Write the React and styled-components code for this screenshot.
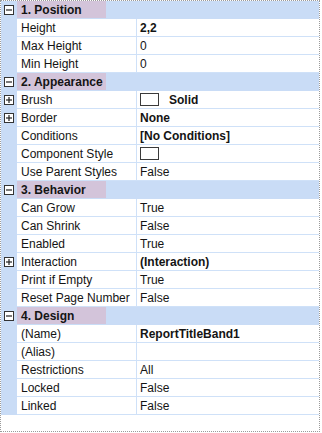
import styled, { createGlobalStyle } from "styled-components";

const GlobalStyle = createGlobalStyle`
  html, body {
    margin: 0;
    padding: 0;
    background: #ffffff;
  }
  body {
    font-family: "Liberation Sans", Arial, sans-serif;
    font-size: 12px;
    color: #141414;
  }
`;

const Grid = styled.div`
  width: 318px;
  height: 430px;
  border: 1px dotted #9a9a9a;
  background: #ffffff;
  display: flex;
  flex-direction: column;
`;

const HeaderRow = styled.div`
  display: flex;
  height: 18px;
  background: #c9dcf6;
`;

const Gutter = styled.div`
  width: 16px;
  flex: none;
  background: #c9dcf6;
  display: flex;
  align-items: center;
  justify-content: center;
  padding-right: 1px;
  box-sizing: border-box;
`;

const Label = styled.div`
  width: 89px;
  height: 17px;
  background: #d3c4da;
  font-weight: bold;
  padding-left: 4px;
  box-sizing: border-box;
  display: flex;
  align-items: center;
`;

const Row = styled.div`
  display: flex;
  height: 18px;
`;

const Name = styled.div`
  width: 120px;
  flex: none;
  box-sizing: border-box;
  padding-left: 4px;
  border-right: 1px solid #cfe1f8;
  border-bottom: 1px solid #cfe1f8;
  display: flex;
  align-items: center;
  white-space: nowrap;
`;

const Value = styled.div`
  flex: 1;
  box-sizing: border-box;
  padding-left: 3px;
  border-bottom: 1px solid #cfe1f8;
  display: flex;
  align-items: center;
  gap: 10px;
  font-weight: ${({ $bold }) => ($bold ? "bold" : "normal")};
  white-space: nowrap;
`;

const Swatch = styled.span`
  width: 19px;
  height: 13px;
  box-sizing: border-box;
  border: 1px solid #3a3a3a;
  background: #ffffff;
  flex: none;
`;

const Toggle = ({ open }) => (
  <svg width="10" height="10" viewBox="0 0 10 10">
    <rect x="0.5" y="0.5" width="9" height="9" fill="#ffffff" stroke="#333" />
    <path d="M2 5h6" stroke="#222" strokeWidth="1.2" />
    {!open && <path d="M5 2v6" stroke="#222" strokeWidth="1.2" />}
  </svg>
);

const sections = [
  {
    title: "1. Position",
    rows: [
      { name: "Height", value: "2,2", bold: true },
      { name: "Max Height", value: "0" },
      { name: "Min Height", value: "0" },
    ],
  },
  {
    title: "2. Appearance",
    rows: [
      { name: "Brush", value: "Solid", bold: true, swatch: true, expand: true },
      { name: "Border", value: "None", bold: true, expand: true },
      { name: "Conditions", value: "[No Conditions]", bold: true },
      { name: "Component Style", swatch: true },
      { name: "Use Parent Styles", value: "False" },
    ],
  },
  {
    title: "3. Behavior",
    rows: [
      { name: "Can Grow", value: "True" },
      { name: "Can Shrink", value: "False" },
      { name: "Enabled", value: "True" },
      { name: "Interaction", value: "(Interaction)", bold: true, expand: true },
      { name: "Print if Empty", value: "True" },
      { name: "Reset Page Number", value: "False" },
    ],
  },
  {
    title: "4. Design",
    rows: [
      { name: "(Name)", value: "ReportTitleBand1", bold: true },
      { name: "(Alias)", value: "" },
      { name: "Restrictions", value: "All" },
      { name: "Locked", value: "False" },
      { name: "Linked", value: "False" },
    ],
  },
];

export default function App() {
  return (
    <>
      <GlobalStyle />
      <Grid>
        {sections.map((s) => (
          <div key={s.title}>
            <HeaderRow>
              <Gutter>
                <Toggle open />
              </Gutter>
              <Label>{s.title}</Label>
            </HeaderRow>
            {s.rows.map((r) => (
              <Row key={r.name}>
                <Gutter>{r.expand && <Toggle />}</Gutter>
                <Name>{r.name}</Name>
                <Value $bold={r.bold}>
                  {r.swatch && <Swatch />}
                  {r.value}
                </Value>
              </Row>
            ))}
          </div>
        ))}
      </Grid>
    </>
  );
}
